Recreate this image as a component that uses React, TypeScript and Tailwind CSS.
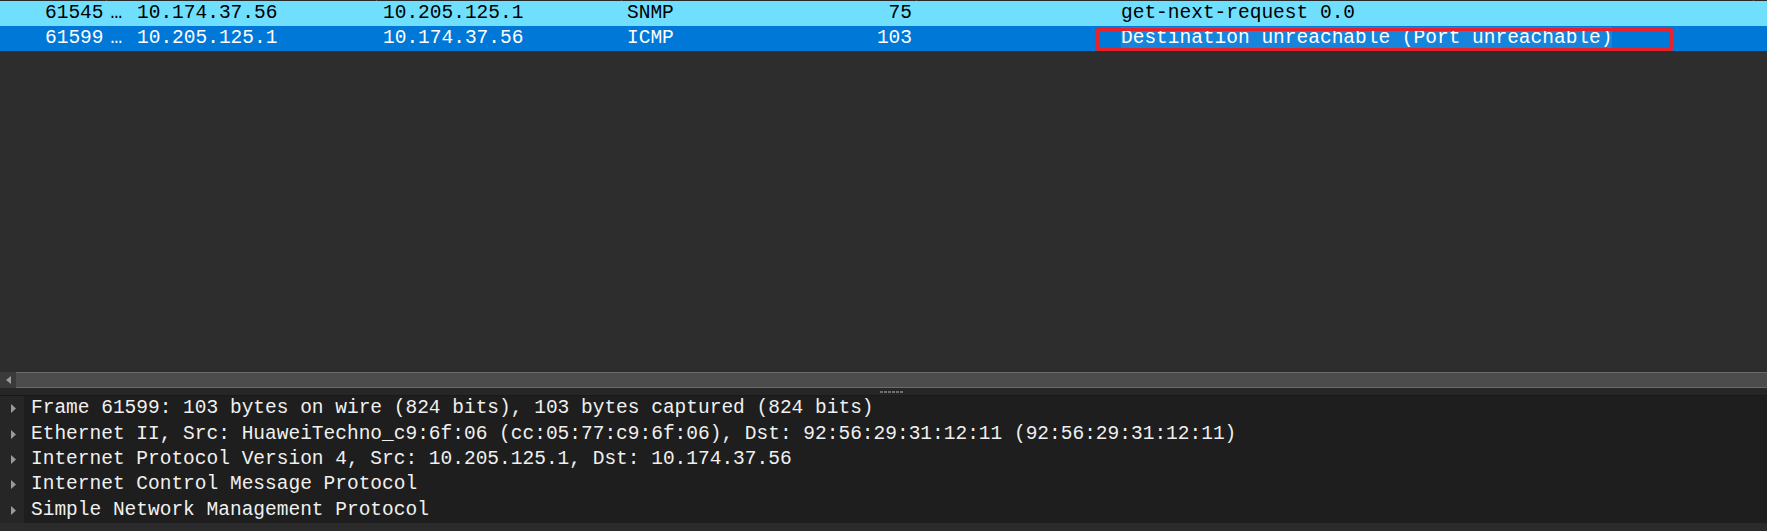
import React from 'react';

const mono = { fontFamily: '"Liberation Mono", "DejaVu Sans Mono", monospace' };

const packets = [
  { no: '61545', src: '10.174.37.56', dst: '10.205.125.1', proto: 'SNMP', len: '75', info: 'get-next-request 0.0', selected: false },
  { no: '61599', src: '10.205.125.1', dst: '10.174.37.56', proto: 'ICMP', len: '103', info: 'Destination unreachable (Port unreachable)', selected: true },
];

const details = [
  'Frame 61599: 103 bytes on wire (824 bits), 103 bytes captured (824 bits)',
  'Ethernet II, Src: HuaweiTechno_c9:6f:06 (cc:05:77:c9:6f:06), Dst: 92:56:29:31:12:11 (92:56:29:31:12:11)',
  'Internet Protocol Version 4, Src: 10.205.125.1, Dst: 10.174.37.56',
  'Internet Control Message Protocol',
  'Simple Network Management Protocol',
];

const PacketRow = ({ p }: { p: (typeof packets)[number] }) => (
  <div className={`relative flex h-[25px] items-center whitespace-nowrap text-[19.5px] ${p.selected ? 'bg-[#0078d7] text-white' : 'bg-[#6fdffd] text-black'}`}>
    <span className="w-[107px] pl-[45px]">{p.no}<span className="ml-[7px]">…</span></span>
    <span className="w-[270px] pl-[30px]">{p.src}</span>
    <span className="w-[245px] pl-[6px]">{p.dst}</span>
    <span className="w-[130px] pl-[5px]">{p.proto}</span>
    <span className="w-[160px] text-right">{p.len}</span>
    <span className="flex-1 pl-[209px]">
      <span className={p.selected ? 'bg-[#1785db]' : ''}>{p.info}</span>
    </span>
    {p.selected && (
      <div className="absolute left-[1096px] top-[2px] h-[23px] w-[577px] rounded-[2px] border-[3px] border-[#e8222a]" />
    )}
  </div>
);

export default function App() {
  return (
    <div className="flex h-[531px] w-[1767px] flex-col overflow-hidden bg-[#2b2b2b]" style={mono}>
      {/* header remnant */}
      <div className="flex h-[1px] bg-[#2a2a2a]">
        <div className="w-[107px] border-r border-[#5a5a5a]" />
        <div className="w-[270px] border-r border-[#5a5a5a]" />
        <div className="w-[245px] border-r border-[#5a5a5a]" />
        <div className="w-[295px] border-r border-[#5a5a5a]" />
        <div className="w-[837px] border-r border-[#5a5a5a]" />
      </div>

      {/* packet list */}
      <div className="flex-1 bg-[#2d2d2d]">
        {packets.map(p => <PacketRow key={p.no} p={p} />)}
      </div>

      {/* horizontal scrollbar */}
      <div className="flex h-[16px] bg-[#2b2b2b]">
        <div className="flex w-[16px] items-center justify-center bg-[#3a3a3a]">
          <svg width="5" height="8" viewBox="0 0 5 8"><path d="M5 0 L0 4 L5 8 Z" fill="#9c9c9c" /></svg>
        </div>
        <div className="flex-1 border-y border-[#6a6a6a] bg-[#4c4c4c]" />
      </div>

      {/* splitter */}
      <div className="flex h-[8px] items-center justify-center border-b border-[#1a1a1a] bg-[#262626]">
        <div className="flex gap-[1px] pl-[15px]">
          {[0, 1, 2, 3, 4, 5].map(i => <div key={i} className="h-[2px] w-[3px] bg-[#6e6e6e]" />)}
        </div>
      </div>

      {/* packet details */}
      <div className="flex flex-col bg-[#1e1e1e]">
        {details.map(d => (
          <div key={d} className="flex h-[25.4px] items-center whitespace-nowrap text-[19.5px] text-[#f0f0f0]">
            <div className="flex h-full w-[24px] items-center bg-[#262626] pl-[11px]">
              <svg width="5" height="9" viewBox="0 0 5 9"><path d="M0 0 L5 4.5 L0 9 Z" fill="#9a9a9a" /></svg>
            </div>
            <span className="pl-[7px]">{d}</span>
          </div>
        ))}
      </div>
      <div className="h-[8px] bg-[#2b2b2b]" />
    </div>
  );
}
